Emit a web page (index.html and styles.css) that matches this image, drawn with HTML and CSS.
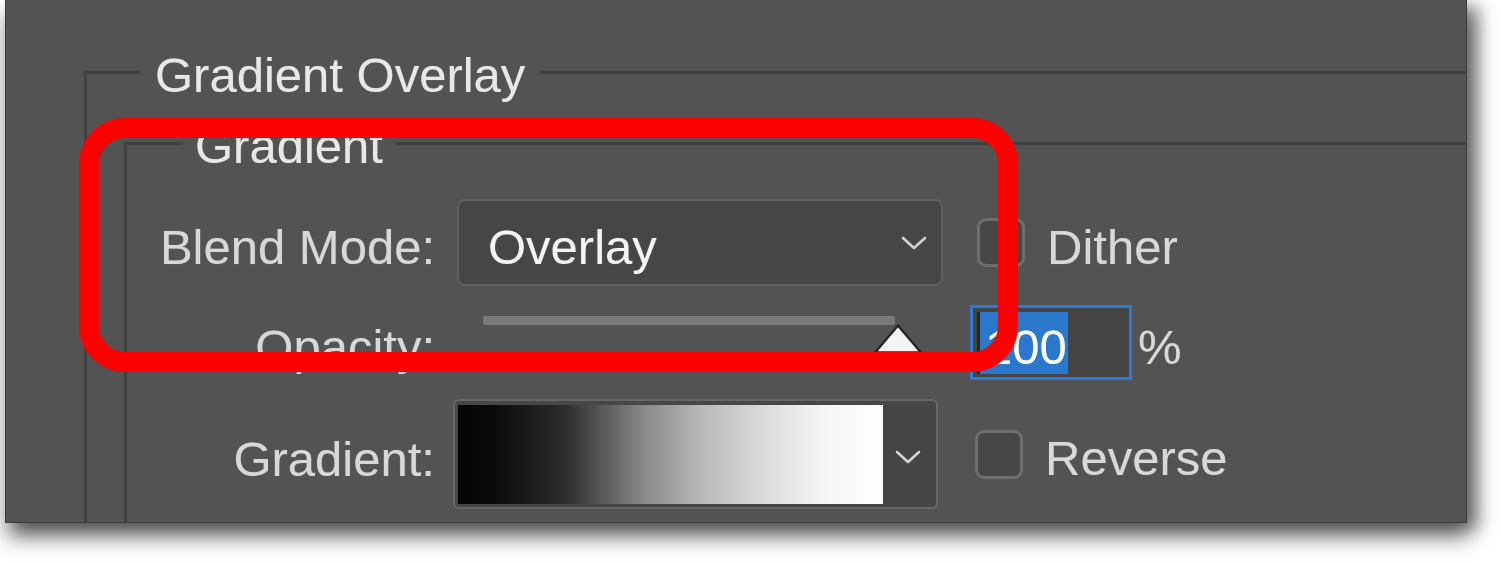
FILE: index.html
```html
<!DOCTYPE html>
<html lang="en">
<head>
  <meta charset="UTF-8">
  <title>Gradient Overlay</title>
  <link rel="stylesheet" href="styles.css">
</head>
<body>
  <div class="panel">
    <fieldset class="group group-outer">
      <legend>Gradient Overlay</legend>

      <fieldset class="group group-inner">
        <legend>Gradient</legend>

        <div class="rows">
          <!-- Blend mode -->
          <span class="row-label">Blend Mode:</span>
          <div class="select">
            <span class="select-value">Overlay</span>
            <svg class="chevron" viewBox="0 0 26 14"><polyline points="2,2 13,12 24,2"/></svg>
          </div>
          <label class="check check-dither"><span class="box"></span><span class="check-text">Dither</span></label>

          <!-- Opacity -->
          <span class="row-label">Opacity:</span>
          <div class="slider">
            <div class="track"></div>
            <svg class="thumb" viewBox="0 0 50 31"><polygon points="25,2 48,29 2,29"/></svg>
          </div>
          <div class="amount">
            <span class="field"><span class="caret"></span><span class="sel">100</span></span>
            <span class="unit">%</span>
          </div>

          <!-- Gradient -->
          <span class="row-label">Gradient:</span>
          <div class="swatch">
            <div class="ramp"></div>
            <div class="swatch-menu">
              <svg class="chevron" viewBox="0 0 26 14"><polyline points="2,2 13,12 24,2"/></svg>
            </div>
          </div>
          <label class="check check-reverse"><span class="box"></span><span class="check-text">Reverse</span></label>
        </div>
      </fieldset>
    </fieldset>

    <!-- annotation -->
    <div class="callout"></div>
  </div>
</body>
</html>
```

FILE: styles.css
```css
html,
body {
  height: 100%;
}

body {
  margin: 0;
  background-color: #ffffff;
  font-family: "Liberation Sans", Arial, sans-serif;
}

.panel {
  position: relative;
  width: 1462px;
  height: 523px;
  margin-left: 5px;
  padding-top: 48px;
  box-sizing: border-box;
  background-color: #535353;
  border-left: 1px solid #3c3c3c;
  border-right: 1px solid #3c3c3c;
  border-bottom: 1px solid #3c3c3c;
  box-shadow: 2px 14px 20px rgba(0, 0, 0, 0.5), 12px 6px 16px rgba(0, 0, 0, 0.4);
  overflow: hidden;
}

.group {
  border: 3px solid #414141;
  padding: 0;
  min-width: 0;
}

.group legend {
  padding: 6px 15px 0 15px;
  font-size: 49px;
  line-height: 42px;
  color: #e8e8e8;
  text-shadow: 0 0 1px rgba(255, 255, 255, 0.35);
}

.group-outer {
  margin: 0 -40px 0 78px;
}

.group-outer > legend {
  margin-left: 53px;
}

.group-inner {
  margin: 23px -40px 0 37px;
  padding: 32px 0 60px 0;
}

.group-inner > legend {
  margin-left: 56px;
  padding: 6px 12px 0 12px;
}

.rows {
  display: grid;
  grid-template-columns: 328px 515px 1fr;
  grid-template-rows: 87px 75px 110px;
  row-gap: 19px;
  font-size: 49px;
  color: #d8d8d8;
  text-shadow: 0 0 1px rgba(255, 255, 255, 0.3);
}

.row-label {
  align-self: center;
  text-align: right;
  padding: 9px 20px 0 0;
}

/* blend mode dropdown */
.select {
  display: flex;
  align-items: center;
  justify-content: space-between;
  width: 486px;
  margin-left: 2px;
  box-sizing: border-box;
  padding: 0 14px 0 29px;
  background-color: #464646;
  border: 2px solid #606060;
  border-radius: 8px;
  color: #f4f4f4;
}

.select-value {
  padding-top: 8px;
}

.chevron {
  width: 26px;
  height: 14px;
  fill: none;
  stroke: #d2d2d2;
  stroke-width: 2.6;
  stroke-linecap: round;
  stroke-linejoin: round;
}

/* checkboxes */
.check {
  display: flex;
  align-items: center;
  gap: 22px;
  padding-left: 7px;
}

.check-reverse {
  padding-left: 5px;
}

.check-text {
  padding-top: 8px;
}

.check .box {
  width: 48px;
  height: 49px;
  box-sizing: border-box;
  border: 3px solid #6e6e6e;
  border-radius: 9px;
  background-color: #474747;
}

/* opacity slider */
.slider {
  position: relative;
  padding: 11px 0 0 28px;
}

.track {
  width: 412px;
  height: 9px;
  border-radius: 2px;
  background-color: #7b7b7b;
}

.thumb {
  position: absolute;
  left: 418px;
  top: 18px;
  width: 50px;
  height: 32px;
  fill: #f4f4f4;
  stroke: #262626;
  stroke-width: 2.5;
  stroke-linejoin: round;
}

.amount {
  display: flex;
  align-items: center;
}

.field {
  display: flex;
  align-items: center;
  width: 162px;
  height: 75px;
  box-sizing: border-box;
  padding: 0 4px 0 4px;
  border: 3px solid #2d7bd6;
  background-color: #444444;
}

.caret {
  width: 3px;
  height: 62px;
  background-color: #262626;
}

.sel {
  width: 88px;
  height: 62px;
  box-sizing: border-box;
  padding: 4px 0 0 5px;
  line-height: 62px;
  background-color: #2a77cc;
  color: #ffffff;
}

.unit {
  margin-left: 6px;
  padding-top: 8px;
}

/* gradient picker */
.swatch {
  display: flex;
  width: 485px;
  margin-left: -2px;
  box-sizing: border-box;
  padding: 4px 3px 3px 3px;
  border: 2px solid #676767;
  border-radius: 6px;
  background-color: #474747;
}

.ramp {
  width: 425px;
  background: linear-gradient(to right,
    #030303 0%, #0b0b0b 8%, #1a1a1a 16%, #2c2c2c 25%, #545454 33%,
    #8a8a8a 44%, #b8b8b8 57%, #d9d9d9 71%, #f5f5f5 86%, #ffffff 100%);
}

.swatch-menu {
  flex: 1;
  display: flex;
  align-items: center;
  justify-content: center;
  background-color: #454545;
}

.swatch-menu .chevron {
  margin-top: 4px;
}

/* red annotation frame */
.callout {
  position: absolute;
  left: 73px;
  top: 118px;
  width: 939px;
  height: 254px;
  box-sizing: border-box;
  border: 20px solid #ff0000;
  border-radius: 46px;
}
```
